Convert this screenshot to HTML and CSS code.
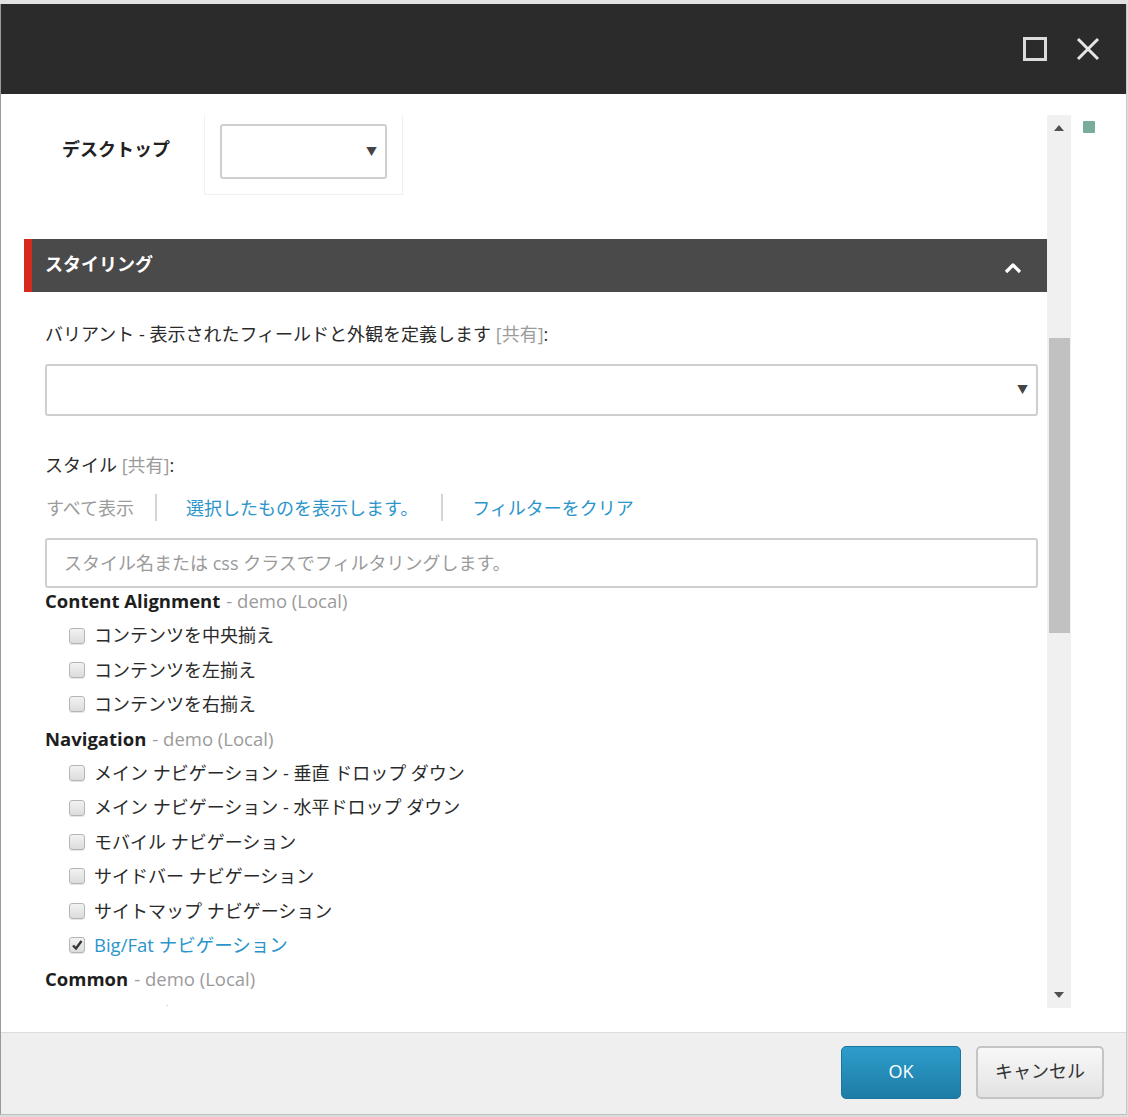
FILE: index.html
```html
<!DOCTYPE html>
<html lang="ja">
<head>
<meta charset="utf-8">
<title>スタイリング</title>
<link rel="stylesheet" href="styles.css">
</head>
<body>
<div class="topstrip"></div>
<div class="dialog">
  <div class="dlg-header">
    <span class="icon-max"></span>
    <svg class="icon-close" width="24" height="24" viewBox="0 0 24 24"><path d="M2 2 L22 22 M22 2 L2 22" stroke="#e6e6e6" stroke-width="3" fill="none"/></svg>
  </div>
  <div class="dlg-body">
    <div class="scroll">
      <div class="desk-row">
        <div class="desk-label">デスクトップ</div>
        <div class="desk-cell">
          <div class="select small"><span class="arrow">▼</span></div>
        </div>
      </div>
      <div class="section-head">
        <span>スタイリング</span>
        <svg width="18" height="12" viewBox="0 0 18 12"><path d="M2 10 L9 3 L16 10" stroke="#fff" stroke-width="3.2" fill="none" stroke-linejoin="round"/></svg>
      </div>
      <div class="section-body">
        <div class="label l-variant">バリアント - 表示されたフィールドと外観を定義します <span class="muted">[共有]</span>:</div>
        <div class="select wide"><span class="arrow">▼</span></div>
        <div class="label l-style">スタイル <span class="muted">[共有]</span>:</div>
        <div class="links">
          <span class="lnk muted first">すべて表示</span>
          <span class="sep"></span>
          <span class="lnk blue">選択したものを表示します。</span>
          <span class="sep"></span>
          <span class="lnk blue">フィルターをクリア</span>
        </div>
        <div class="filter">スタイル名または css クラスでフィルタリングします。</div>
        <div class="list">
          <div class="row title"><b>Content Alignment</b> <span class="muted">- demo (Local)</span></div>
          <div class="row item"><span class="cb"></span>コンテンツを中央揃え</div>
          <div class="row item"><span class="cb"></span>コンテンツを左揃え</div>
          <div class="row item"><span class="cb"></span>コンテンツを右揃え</div>
          <div class="row title"><b>Navigation</b> <span class="muted">- demo (Local)</span></div>
          <div class="row item"><span class="cb"></span>メイン ナビゲーション - 垂直 ドロップ ダウン</div>
          <div class="row item"><span class="cb"></span>メイン ナビゲーション - 水平ドロップ ダウン</div>
          <div class="row item"><span class="cb"></span>モバイル ナビゲーション</div>
          <div class="row item"><span class="cb"></span>サイドバー ナビゲーション</div>
          <div class="row item"><span class="cb"></span>サイトマップ ナビゲーション</div>
          <div class="row item checked"><span class="cb"><svg width="14" height="14" viewBox="0 0 14 14"><path d="M3 7.5 L6 10.5 L11.5 3" stroke="#333" stroke-width="2.4" fill="none"/></svg></span>Big/Fat ナビゲーション</div>
          <div class="row title"><b>Common</b> <span class="muted">- demo (Local)</span></div>
          <div class="row item"><span class="cb"></span>ページ ビュー</div>
        </div>
      </div>
    </div>
    <div class="scrollbar">
      <div class="sb-btn"><span class="tri-up"></span></div>
      <div class="sb-track"><div class="sb-thumb"></div></div>
      <div class="sb-btn"><span class="tri-down"></span></div>
    </div>
    <div class="side"><span class="green"></span></div>
  </div>
  <div class="dlg-footer">
    <button class="btn ok">OK</button>
    <button class="btn cancel">キャンセル</button>
  </div>
</div>
</body>
</html>
```

FILE: styles.css
```css
* { box-sizing: border-box; }
html, body { margin: 0; padding: 0; }
body {
  background: #dcdcdc;
  font-family: "Open Sans", "Noto Sans CJK JP", sans-serif;
  font-size: 18px;
  color: #2a2a2a;
  width: 1128px;
  height: 1117px;
  overflow: hidden;
}
.topstrip { height: 4px; background: #e2e2e2; }
.dialog {
  width: 1127px;
  border-left: 1px solid #9a9a9a;
  border-right: 1px solid #c8c8c8;
  border-bottom: 1px solid #c0c0c0;
  background: #fff;
}
.dlg-header {
  height: 90px;
  background: #2b2b2b;
  display: flex;
  align-items: center;
  justify-content: flex-end;
  padding-right: 26px;
  gap: 29px;
}
.icon-max {
  width: 24px; height: 24px;
  border: 3px solid #dcdcdc;
  display: block;
}
.icon-close { display: block; }

.dlg-body {
  height: 938px;
  display: flex;
  padding: 21px 0 24px 23px;
}
.scroll {
  width: 1023px;
  height: 891px;
  margin-bottom: 2px;
  overflow: hidden;
}
.desk-row { display: flex; height: 80px; }
.desk-label {
  width: 180px;
  padding-left: 38px;
  padding-top: 22px;
  font-weight: bold;
  font-size: 18px;
  line-height: 24px;
  color: #222;
}
.desk-cell {
  width: 199px;
  border: 1px solid #f0f0f0;
  border-top: none;
  padding: 9px 15px 0 15px;
}
.select {
  border: 2px solid #cfcfcf;
  border-radius: 3px;
  background: #fff;
  position: relative;
}
.select.small { width: 167px; height: 55px; }
.select.wide { height: 52px; margin-top: 18px; }
.arrow {
  position: absolute;
  right: 8px;
  top: 50%;
  transform: translateY(-50%);
  font-size: 11px;
  color: #444;
  line-height: 12px;
}
.section-head {
  margin-top: 44px;
  height: 53px;
  background: #4a4a4a;
  border-left: 8px solid #d52b1e;
  padding: 0 25px 0 13px;
  display: flex;
  align-items: center;
  justify-content: space-between;
  color: #fff;
  font-weight: bold;
  font-size: 18px;
}
.section-head span { margin-top: -6px; }
.section-head svg { margin-top: 4px; }
.section-body { padding: 0 9px 0 21px; }
.label { line-height: 24px; font-size: 18px; }
.l-variant { margin-top: 30px; }
.l-style { margin-top: 37px; }
.muted { color: #9b9b9b; }
.blue { color: #2b95cb; }
.links {
  margin-top: 17px;
  height: 27px;
  display: flex;
  align-items: center;
  font-size: 18px;
}
.lnk { line-height: 24px; }
.lnk.first { margin-left: 1px; }
.sep {
  width: 2px; height: 27px;
  background: #d4d4d4;
  margin: 0 29px 0 21px;
}
.lnk.blue + .sep { margin-left: 23px; }
.filter {
  margin-top: 17px;
  height: 50px;
  border: 2px solid #cfcfcf;
  border-radius: 3px;
  padding-left: 17px;
  line-height: 46px;
  color: #9a9a9a;
  font-size: 18px;
}
.list { margin-top: -4px; }
.row {
  height: 34.4px;
  line-height: 34.4px;
  display: flex;
  align-items: center;
  white-space: nowrap;
}
.row.title { font-size: 18.5px; }
.row.title b { font-weight: bold; color: #1e1e1e; margin-right: 6px; }
.row.item { padding-left: 24px; font-size: 18px; }
.row.checked { color: #2b95cb; }
.row.checked { font-size: 18.5px; }
.cb {
  width: 16px; height: 16px;
  border: 1px solid #b5b5b5;
  border-radius: 3px;
  background: linear-gradient(#f2f2f2, #dcdcdc);
  margin-right: 9px;
  flex: none;
  display: flex;
  align-items: center;
  justify-content: center;
  box-shadow: 0 1px 0 #e6e6e6;
}
.cb svg { display: block; }

.scrollbar {
  width: 24px;
  height: 893px;
  background: #f0f0f0;
  display: flex;
  flex-direction: column;
}
.sb-btn {
  height: 26px;
  display: flex;
  align-items: center;
  justify-content: center;
  flex: none;
}
.tri-up {
  width: 0; height: 0;
  border-left: 5px solid transparent;
  border-right: 5px solid transparent;
  border-bottom: 6px solid #505050;
}
.tri-down {
  width: 0; height: 0;
  border-left: 5px solid transparent;
  border-right: 5px solid transparent;
  border-top: 6px solid #505050;
}
.sb-track { flex: 1; padding: 0 1px 0 2px; }
.sb-thumb {
  margin-top: 197px;
  height: 295px;
  background: #c1c1c1;
}
.side { width: 55px; padding: 6px 0 0 12px; }
.green {
  display: block;
  width: 12px; height: 12px;
  background: #79ac99;
  border-radius: 1px;
}
.dlg-footer {
  height: 82px;
  background: #efefef;
  border-top: 1px solid #dcdcdc;
  display: flex;
  justify-content: flex-end;
  align-items: flex-start;
  padding: 13px 22px 0 0;
  gap: 15px;
}
.btn {
  height: 53px;
  border-radius: 5px;
  font-family: "Open Sans", "Noto Sans CJK JP", sans-serif;
  font-size: 18px;
  line-height: 20px;
  padding: 0 0 4px 0;
  cursor: pointer;
}
.btn.ok {
  width: 120px;
  background: linear-gradient(#2d9dcb, #1e7ca5);
  border: 1px solid #1c74a0;
  color: #fff;
}
.btn.cancel {
  width: 128px;
  background: linear-gradient(#f8f8f8, #e2e2e2);
  border: 2px solid #c4c4c4;
  color: #333;
}
```
